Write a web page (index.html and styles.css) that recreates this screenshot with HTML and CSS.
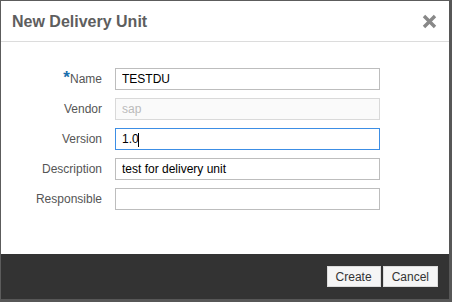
FILE: index.html
```html
<!DOCTYPE html>
<html lang="en">
    <head>
        <meta charset="UTF-8">
        <title>New Delivery Unit</title>
        <link rel="stylesheet" href="styles.css">
    </head>
    <body>
        <div class="dialog">
            <div class="header">
                <span class="title">New Delivery Unit</span>
                <svg class="close" width="15" height="15" viewBox="0 0 15 15">
                    <path d="M2 2 L13 13 M13 2 L2 13" stroke="#888" stroke-width="3.4" fill="none"/>
                </svg>
            </div>

            <div class="form">
                <label class="lbl"><span class="req">*</span>Name</label>
                <input class="field" type="text" value="TESTDU">

                <label class="lbl">Vendor</label>
                <input class="field disabled" type="text" value="sap" disabled>

                <label class="lbl">Version</label>
                <div class="wrap">
                    <input class="field focus" type="text" value="1.0">
                    <span class="caret"></span>
                </div>

                <label class="lbl">Description</label>
                <input class="field" type="text" value="test for delivery unit">

                <label class="lbl">Responsible</label>
                <input class="field" type="text" value="">
            </div>

            <div class="footer">
                <button class="btn">Create</button>
                <button class="btn">Cancel</button>
            </div>
        </div>
    </body>
</html>
```

FILE: styles.css
```css
*{
    margin: 0;
    padding: 0;
    box-sizing: border-box;
}

body{
    width: 452px;
    height: 302px;
    overflow: hidden;
    background: #fff;
    font-family: "Liberation Sans", Arial, sans-serif;
}

.dialog{
    width: 452px;
    height: 302px;
    display: flex;
    flex-direction: column;
    border-top: 1px solid #5c5c5c;
    border-left: 1px solid #5c5c5c;
    border-right: 3px solid #575757;
    border-bottom: 3px solid #575757;
    background: #fff;
}

.header{
    height: 41px;
    flex: none;
    display: flex;
    align-items: center;
    justify-content: space-between;
    padding: 2px 12px 0 11px;
    border-bottom: 1px solid #dcdcdc;
}

.title{
    font-size: 16px;
    font-weight: bold;
    color: #5e5e5e;
}

.close{
    display: block;
    margin-top: -1px;
}

.form{
    flex: 1;
    display: grid;
    grid-template-columns: 101px 265px;
    column-gap: 13px;
    row-gap: 8px;
    align-content: start;
    align-items: center;
    padding-top: 26px;
}

.lbl{
    text-align: right;
    font-size: 12px;
    color: #555;
}

.req{
    color: #1a6fae;
    font-size: 17px;
    font-weight: bold;
    line-height: 10px;
}

.field{
    display: block;
    width: 265px;
    height: 22px;
    padding: 0 6px;
    border: 1px solid #bdbdbd;
    background: #fff;
    font-family: "Liberation Sans", Arial, sans-serif;
    font-size: 12px;
    color: #000;
    outline: none;
}

.disabled{
    background: #fafafa;
    border-color: #d9d9d9;
    color: #bbb;
}

.focus{
    border-color: #3c8ee5;
}

.wrap{
    position: relative;
}

.caret{
    position: absolute;
    left: 23px;
    top: 5px;
    width: 1px;
    height: 14px;
    background: #000;
}

.footer{
    height: 45px;
    flex: none;
    display: flex;
    justify-content: flex-end;
    align-items: flex-start;
    gap: 2px;
    padding: 12px 11px 0 0;
    background: #333;
}

.btn{
    height: 21px;
    padding: 0 8px;
    border: 1px solid #dcdcdc;
    background: #f5f5f5;
    font-family: "Liberation Sans", Arial, sans-serif;
    font-size: 12px;
    color: #333;
}
```
